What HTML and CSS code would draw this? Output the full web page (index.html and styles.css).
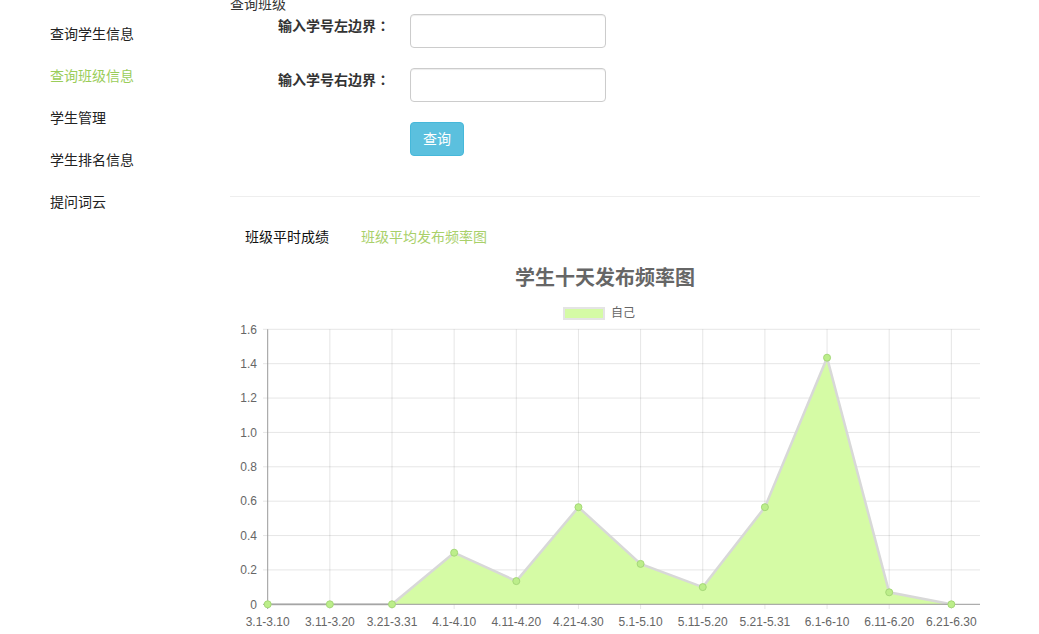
FILE: index.html
```html
<!DOCTYPE html>
<html lang="zh-CN">
<head>
<meta charset="utf-8">
<title>查询班级</title>
<link rel="stylesheet" href="styles.css">
</head>
<body>
<div class="page">
  <nav class="sidebar">
    <ul class="menu">
      <li class="menu-item">查询学生信息</li>
      <li class="menu-item active">查询班级信息</li>
      <li class="menu-item">学生管理</li>
      <li class="menu-item">学生排名信息</li>
      <li class="menu-item">提问词云</li>
    </ul>
  </nav>
  <main class="main">
    <div class="heading">查询班级</div>
    <form class="form">
      <div class="form-row">
        <label class="form-label">输入学号左边界<span class="colon" lang="zh-TW">：</span></label>
        <input class="form-input" type="text">
      </div>
      <div class="form-row">
        <label class="form-label">输入学号右边界<span class="colon" lang="zh-TW">：</span></label>
        <input class="form-input" type="text">
      </div>
      <div class="form-row last">
        <span class="form-label"></span>
        <button class="btn" type="button">查询</button>
      </div>
    </form>
    <div class="divider"></div>
    <div class="tabs">
      <span class="tab">班级平时成绩</span>
      <span class="tab active">班级平均发布频率图</span>
    </div>
    <div class="chart-title">学生十天发布频率图</div>
    <div class="legend"><span class="legend-box"></span><span class="legend-text">自己</span></div>
    <svg class="chart" width="750" height="314" viewBox="0 0 750 314">
      <g class="grid">
        <line x1="33" y1="9.3" x2="750" y2="9.3"/>
        <line x1="33" y1="43.7" x2="750" y2="43.7"/>
        <line x1="33" y1="78.05" x2="750" y2="78.05"/>
        <line x1="33" y1="112.4" x2="750" y2="112.4"/>
        <line x1="33" y1="146.8" x2="750" y2="146.8"/>
        <line x1="33" y1="181.2" x2="750" y2="181.2"/>
        <line x1="33" y1="215.55" x2="750" y2="215.55"/>
        <line x1="33" y1="249.9" x2="750" y2="249.9"/>
        <line x1="99.85" y1="9.3" x2="99.85" y2="289"/>
        <line x1="162" y1="9.3" x2="162" y2="289"/>
        <line x1="224.15" y1="9.3" x2="224.15" y2="289"/>
        <line x1="286.3" y1="9.3" x2="286.3" y2="289"/>
        <line x1="348.45" y1="9.3" x2="348.45" y2="289"/>
        <line x1="410.6" y1="9.3" x2="410.6" y2="289"/>
        <line x1="472.75" y1="9.3" x2="472.75" y2="289"/>
        <line x1="534.9" y1="9.3" x2="534.9" y2="289"/>
        <line x1="597.05" y1="9.3" x2="597.05" y2="289"/>
        <line x1="659.2" y1="9.3" x2="659.2" y2="289"/>
        <line x1="721.35" y1="9.3" x2="721.35" y2="289"/>
      </g>
      <polygon class="area" points="37.7,284.3 99.85,284.3 162,284.3 224.15,232.7 286.3,261.1 348.45,187.2 410.6,243.9 472.75,267.1 534.9,187.2 597.05,37.7 659.2,272.3 721.35,284.3"/>
      <polyline class="line" points="37.7,284.3 99.85,284.3 162,284.3 224.15,232.7 286.3,261.1 348.45,187.2 410.6,243.9 472.75,267.1 534.9,187.2 597.05,37.7 659.2,272.3 721.35,284.3"/>
      <g class="axis">
        <line x1="37.7" y1="9.3" x2="37.7" y2="289"/>
        <line x1="33" y1="284.3" x2="750" y2="284.3"/>
      </g>
      <g class="points">
        <circle cx="37.7" cy="284.3" r="3.5"/>
        <circle cx="99.85" cy="284.3" r="3.5"/>
        <circle cx="162" cy="284.3" r="3.5"/>
        <circle cx="224.15" cy="232.7" r="3.5"/>
        <circle cx="286.3" cy="261.1" r="3.5"/>
        <circle cx="348.45" cy="187.2" r="3.5"/>
        <circle cx="410.6" cy="243.9" r="3.5"/>
        <circle cx="472.75" cy="267.1" r="3.5"/>
        <circle cx="534.9" cy="187.2" r="3.5"/>
        <circle cx="597.05" cy="37.7" r="3.5"/>
        <circle cx="659.2" cy="272.3" r="3.5"/>
        <circle cx="721.35" cy="284.3" r="3.5"/>
      </g>
      <g class="ylabels">
        <text x="27" y="13.5">1.6</text>
        <text x="27" y="47.9">1.4</text>
        <text x="27" y="82.2">1.2</text>
        <text x="27" y="116.6">1.0</text>
        <text x="27" y="151">0.8</text>
        <text x="27" y="185.4">0.6</text>
        <text x="27" y="219.7">0.4</text>
        <text x="27" y="254.1">0.2</text>
        <text x="27" y="288.5">0</text>
      </g>
      <g class="xlabels">
        <text x="37.7" y="305.5">3.1-3.10</text>
        <text x="99.85" y="305.5">3.11-3.20</text>
        <text x="162" y="305.5">3.21-3.31</text>
        <text x="224.15" y="305.5">4.1-4.10</text>
        <text x="286.3" y="305.5">4.11-4.20</text>
        <text x="348.45" y="305.5">4.21-4.30</text>
        <text x="410.6" y="305.5">5.1-5.10</text>
        <text x="472.75" y="305.5">5.11-5.20</text>
        <text x="534.9" y="305.5">5.21-5.31</text>
        <text x="597.05" y="305.5">6.1-6-10</text>
        <text x="659.2" y="305.5">6.11-6.20</text>
        <text x="721.35" y="305.5">6.21-6.30</text>
      </g>
    </svg>
  </main>
</div>
</body>
</html>
```

FILE: styles.css
```css
html, body {
  margin: 0;
  padding: 0;
  background: #fff;
  overflow: hidden;
}
body {
  font-family: "Liberation Sans", "Noto Sans CJK SC", sans-serif;
  font-size: 14px;
  color: #333;
}
.page {
  display: flex;
  align-items: flex-start;
  width: 1039px;
  height: 634px;
}
.sidebar {
  width: 230px;
  flex: none;
}
.menu {
  list-style: none;
  margin: 13px 0 0 0;
  padding: 0 0 0 50px;
}
.menu-item {
  line-height: 20px;
  padding: 11px 0;
  color: #222;
}
.menu-item.active {
  color: #9acd5a;
}
.main {
  width: 750px;
  flex: none;
}
.heading {
  line-height: 20px;
  margin-top: -6px;
  color: #333;
}
.form {
  margin: 0;
}
.form-row {
  display: flex;
  align-items: flex-start;
  margin-bottom: 20px;
}
.form-row.last {
  margin-bottom: 0;
}
.form-label {
  width: 160px;
  flex: none;
  text-align: right;
  font-weight: bold;
  line-height: 20px;
  padding-top: 1px;
  margin-right: 20px;
  color: #333;
}
.colon {
  font-family: "Noto Sans CJK TC", sans-serif;
}
.form-input {
  box-sizing: border-box;
  width: 196px;
  height: 34px;
  margin: 0;
  border: 1px solid #ccc;
  border-radius: 4px;
  box-shadow: inset 0 1px 1px rgba(0,0,0,0.075);
  padding: 6px 12px;
  font-size: 14px;
}
.btn {
  box-sizing: border-box;
  width: 54px;
  height: 34px;
  margin: 0;
  border: 1px solid #46b8da;
  border-radius: 4px;
  background: #5bc0de;
  color: #fff;
  font-family: "Liberation Sans", "Noto Sans CJK SC", sans-serif;
  font-size: 14px;
  line-height: 20px;
  padding: 0;
}
.divider {
  height: 1px;
  background: #eee;
  margin-top: 40px;
}
.tabs {
  display: flex;
  margin-top: 30px;
  line-height: 20px;
}
.tab {
  padding: 0 15px;
  margin-right: 2px;
  color: #111;
}
.tab.active {
  color: #a9d06a;
}
.chart-title {
  margin-top: 19px;
  text-align: center;
  font-size: 20px;
  font-weight: bold;
  line-height: 24px;
  color: #666;
}
.legend {
  display: flex;
  justify-content: center;
  align-items: center;
  height: 14px;
  margin-top: 16px;
  padding-right: 12px;
}
.legend-box {
  box-sizing: border-box;
  width: 42px;
  height: 13px;
  background: #d5fba5;
  border: 2px solid #e4e4e4;
  margin-right: 6px;
}
.legend-text {
  font-size: 12px;
  color: #666;
  line-height: 14px;
}
.chart {
  display: block;
}
.grid line {
  stroke: rgba(0,0,0,0.1);
  stroke-width: 1;
}
.axis line {
  stroke: #999;
  stroke-width: 1;
}
.area {
  fill: #d5fba5;
  stroke: none;
}
.line {
  fill: none;
  stroke: #d8d8d8;
  stroke-width: 2.5;
  stroke-linejoin: miter;
}
.points circle {
  fill: #bcee8a;
  stroke: #a5d878;
  stroke-width: 1;
}
.ylabels text {
  font-family: "Liberation Sans", sans-serif;
  font-size: 12px;
  fill: #666;
  text-anchor: end;
}
.xlabels text {
  font-family: "Liberation Sans", sans-serif;
  font-size: 12px;
  fill: #666;
  text-anchor: middle;
}
```
